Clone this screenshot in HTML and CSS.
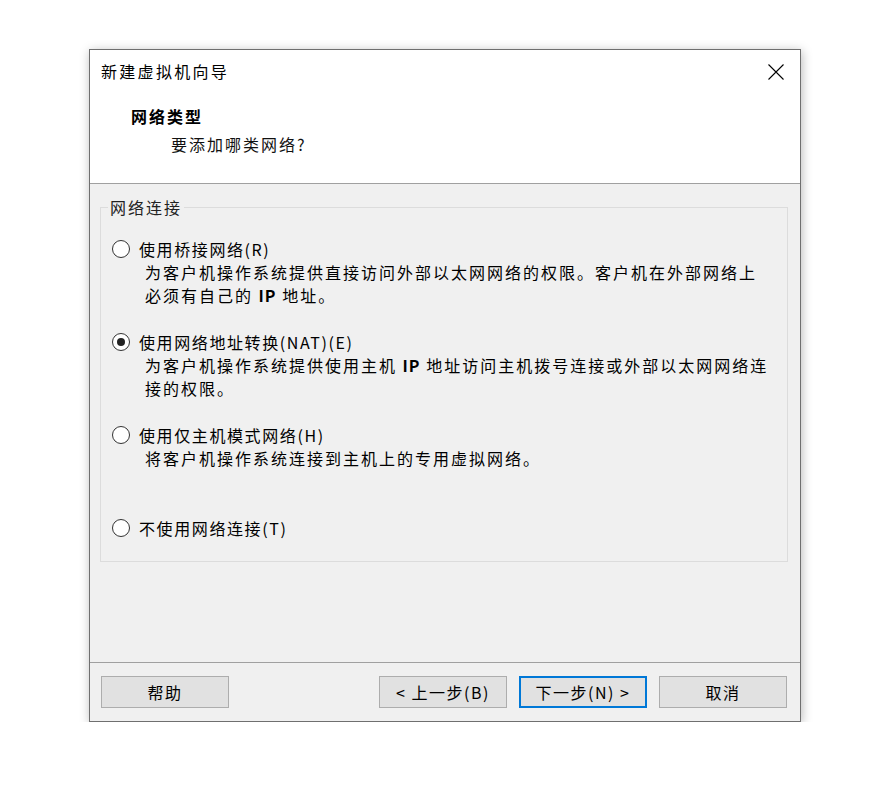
FILE: index.html
```html
<!DOCTYPE html>
<html lang="zh-CN">
<head>
<meta charset="utf-8">
<title>新建虚拟机向导</title>
<link rel="stylesheet" href="styles.css">
</head>
<body>
<div class="window">
  <div class="header">
    <div class="titlebar">
      <span class="title">新建虚拟机向导</span>
      <svg class="close" width="16" height="16" viewBox="0 0 16 16"><path d="M0.5 0.5 L15.5 15.5 M15.5 0.5 L0.5 15.5" stroke="#000" stroke-width="1.1" fill="none"/></svg>
    </div>
    <div class="heading">网络类型</div>
    <div class="subheading">要添加哪类网络?</div>
  </div>
  <div class="body">
    <fieldset class="group">
      <legend class="legend">网络连接</legend>
      <div class="option">
        <div class="opt-row"><span class="radio"></span><span class="label">使用桥接网络(R)</span></div>
        <div class="desc">为客户机操作系统提供直接访问外部以太网网络的权限。客户机在外部网络上<br>必须有自己的 <b>IP</b> 地址。</div>
      </div>
      <div class="option">
        <div class="opt-row"><span class="radio checked"></span><span class="label">使用网络地址转换(NAT)(E)</span></div>
        <div class="desc">为客户机操作系统提供使用主机 <b>IP</b> 地址访问主机拨号连接或外部以太网网络连<br>接的权限。</div>
      </div>
      <div class="option">
        <div class="opt-row"><span class="radio"></span><span class="label">使用仅主机模式网络(H)</span></div>
        <div class="desc">将客户机操作系统连接到主机上的专用虚拟网络。</div>
      </div>
      <div class="option">
        <div class="opt-row"><span class="radio"></span><span class="label">不使用网络连接(T)</span></div>
      </div>
    </fieldset>
  </div>
  <div class="footer">
    <button class="btn">帮助</button>
    <button class="btn back">&lt; 上一步(B)</button>
    <button class="btn primary">下一步(N) &gt;</button>
    <button class="btn">取消</button>
  </div>
</div>
</body>
</html>
```

FILE: styles.css
```css
html, body {
  margin: 0;
  padding: 0;
  background: #ffffff;
}
body {
  padding: 49px 0 0 89px;
  font-family: "Noto Sans CJK SC", "Noto Sans", sans-serif;
  font-size: 16px;
  color: #000;
}
.window {
  width: 712px;
  height: 673px;
  box-sizing: border-box;
  border: 1px solid #6f6f6f;
  background: #f0f0f0;
  box-shadow: 1px 2px 10px rgba(0, 0, 0, 0.28);
  display: flex;
  flex-direction: column;
}
.header {
  height: 134px;
  box-sizing: border-box;
  background: #fff;
  border-bottom: 1px solid #a0a0a0;
  padding-top: 10px;
}
.titlebar {
  display: flex;
  align-items: center;
  justify-content: space-between;
  padding-left: 11px;
  padding-right: 16px;
  height: 22px;
}
.title {
  line-height: 22px;
  letter-spacing: 2.3px;
}
.close {
  display: block;
  margin-top: 1px;
}
.heading {
  margin-top: 23px;
  margin-left: 41px;
  line-height: 22px;
  font-weight: 700;
  letter-spacing: 2px;
}
.subheading {
  margin-top: 6px;
  margin-left: 81px;
  line-height: 22px;
  letter-spacing: 2px;
  color: #111;
}
.body {
  flex: 1;
  padding: 12px 12px 0 10px;
}
.group {
  margin: 0;
  padding: 19px 0 21px 11px;
  border: 1px solid #dcdcdc;
  min-width: 0;
  display: flex;
  flex-direction: column;
  gap: 23px;
}
.legend {
  margin-left: -4px;
  padding: 0 2px;
  line-height: 22px;
  letter-spacing: 2px;
  color: #222;
}
.option {
  display: flex;
  flex-direction: column;
}
.opt-row {
  display: flex;
  align-items: center;
  height: 24px;
}
.radio {
  width: 18px;
  height: 18px;
  box-sizing: border-box;
  border: 1.5px solid #333;
  border-radius: 50%;
  background: #fff;
  display: flex;
  align-items: center;
  justify-content: center;
  flex-shrink: 0;
}
.radio.checked::after {
  content: "";
  width: 8px;
  height: 8px;
  border-radius: 50%;
  background: #222;
}
.label {
  margin-left: 9px;
  line-height: 24px;
  letter-spacing: 1.6px;
  white-space: nowrap;
}
.desc {
  margin-left: 33px;
  line-height: 23px;
  min-height: 46px;
  letter-spacing: 2px;
  white-space: nowrap;
}
.desc b {
  font-weight: 700;
  letter-spacing: 1px;
}
.footer {
  border-top: 1px solid #a0a0a0;
  padding: 13px 13px 0 11px;
  height: 59px;
  box-sizing: border-box;
  display: flex;
  gap: 12px;
}
.btn {
  width: 128px;
  height: 32px;
  box-sizing: border-box;
  border: 1px solid #adadad;
  background: #e1e1e1;
  font-family: "Noto Sans CJK SC", "Noto Sans", sans-serif;
  font-size: 16px;
  letter-spacing: 1.5px;
  color: #000;
  padding: 0;
  margin: 0;
}
.btn.back {
  margin-left: auto;
}
.btn.primary {
  border: 2px solid #0078d7;
}
```
